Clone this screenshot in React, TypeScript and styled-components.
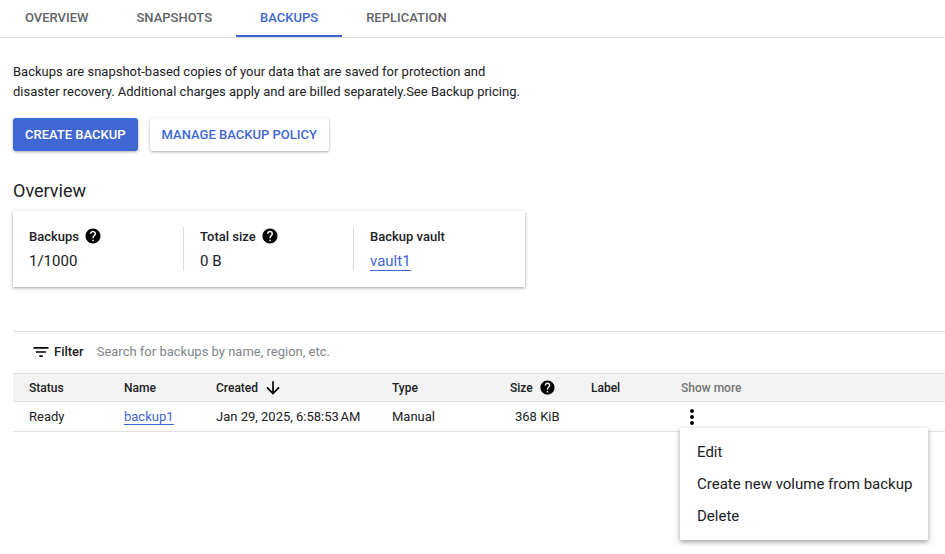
import React from 'react';
import styled, { createGlobalStyle } from 'styled-components';
import { MdArrowDownward, MdFilterList, MdHelp, MdMoreVert } from 'react-icons/md';

const GlobalStyle = createGlobalStyle`
  html, body {
    margin: 0;
    padding: 0;
    background: #fff;
    overflow: hidden;
  }
  body {
    font-family: Roboto, "Liberation Sans", sans-serif;
    color: #202124;
    -webkit-font-smoothing: antialiased;
  }
`;

const Page = styled.div`
  position: relative;
  width: 945px;
  height: 554px;
  overflow: hidden;
`;

const TabBar = styled.div`
  display: flex;
  height: 37px;
  padding-left: 1px;
  border-bottom: 1px solid #dadce0;
`;

const Tab = styled.div<{ $active?: boolean }>`
  display: flex;
  align-items: center;
  height: 37px;
  box-sizing: border-box;
  padding: 0 24px 1px;
  font-size: 13px;
  font-weight: 500;
  color: ${(p) => (p.$active ? '#3f67d3' : '#5f6368')};
  border-bottom: 2px solid ${(p) => (p.$active ? '#3f67d3' : 'transparent')};
`;

const Content = styled.div`
  padding: 24px 0 0 13px;
`;

const Intro = styled.p`
  margin: 0;
  width: 520px;
  font-size: 13px;
  line-height: 20px;
`;

const ButtonRow = styled.div`
  display: flex;
  gap: 12px;
  margin-top: 16px;
`;

const Button = styled.div<{ $primary?: boolean }>`
  display: flex;
  align-items: center;
  height: 33px;
  padding: 0 12px;
  border-radius: 3px;
  font-size: 13px;
  font-weight: 500;
  color: ${(p) => (p.$primary ? '#fff' : '#3f67d3')};
  background: ${(p) => (p.$primary ? '#3f67d3' : '#fff')};
  box-shadow: 0 1px 3px rgba(60, 64, 67, 0.45);
`;

const SectionTitle = styled.h2`
  margin: 29px 0 0;
  font-size: 18px;
  line-height: 22px;
  font-weight: 400;
`;

const Card = styled.div`
  display: flex;
  box-sizing: border-box;
  width: 512px;
  height: 76px;
  margin-top: 9px;
  padding: 16px 0;
  box-shadow: 0 1px 3px rgba(60, 64, 67, 0.5);
`;

const Stat = styled.div<{ $first?: boolean; $width: number }>`
  box-sizing: border-box;
  width: ${(p) => p.$width}px;
  padding-left: 16px;
  border-left: ${(p) => (p.$first ? 'none' : '1px solid #dadce0')};
`;

const StatLabel = styled.div`
  display: flex;
  align-items: center;
  gap: 5px;
  height: 18px;
  font-size: 13px;
  font-weight: 500;
  svg {
    font-size: 18px;
    color: #000;
  }
`;

const StatValue = styled.div`
  margin-top: 6px;
  font-size: 15px;
  line-height: 20px;
`;

const Link = styled.span`
  color: #3f67d3;
  border-bottom: 1px solid #3f67d3;
`;

const Section = styled.div`
  margin: 44px 0 0 13px;
  border-top: 1px solid #dadce0;
`;

const FilterBar = styled.div`
  display: flex;
  align-items: center;
  height: 41px;
  padding: 0 0 2px 18px;
  box-sizing: border-box;
  font-size: 13px;
  svg {
    font-size: 20px;
    color: #000;
  }
`;

const FilterLabel = styled.span`
  margin-left: 3px;
  font-weight: 500;
`;

const FilterHint = styled.span`
  margin-left: 13px;
  color: #80868b;
`;

const Row = styled.div<{ $header?: boolean }>`
  display: grid;
  grid-template-columns: 95px 92px 176px 118px 81px 90px 1fr;
  align-items: center;
  box-sizing: border-box;
  padding-left: 16px;
  height: ${(p) => (p.$header ? '29px' : '30px')};
  font-size: ${(p) => (p.$header ? '12px' : '13px')};
  font-weight: ${(p) => (p.$header ? 500 : 400)};
  background: ${(p) => (p.$header ? '#f3f3f3' : '#fff')};
  border-top: ${(p) => (p.$header ? '1px solid #e0e0e0' : 'none')};
  border-bottom: 1px solid #e0e0e0;
`;

const HeadCell = styled.div<{ $muted?: boolean }>`
  display: flex;
  align-items: center;
  color: ${(p) => (p.$muted ? '#757575' : 'inherit')};
`;

const SortIcon = styled(MdArrowDownward)`
  font-size: 20px;
  margin-left: 5px;
  color: #000;
`;

const SizeHelp = styled(MdHelp)`
  font-size: 17px;
  margin-left: 6px;
  color: #000;
`;

const SizeCell = styled.div`
  padding-left: 5px;
`;

const MoreCell = styled.div`
  display: flex;
  margin-left: -1px;
  svg {
    font-size: 24px;
    color: #000;
  }
`;

const Menu = styled.div`
  position: absolute;
  left: 680px;
  top: 428px;
  width: 248px;
  padding: 8px 0;
  background: #fff;
  box-shadow: 0 2px 5px rgba(60, 64, 67, 0.5);
`;

const MenuItem = styled.div`
  display: flex;
  align-items: center;
  height: 32px;
  padding-left: 17px;
  font-size: 15px;
`;

const App: React.FC = () => {
  return (
    <Page>
      <GlobalStyle />
      <TabBar>
        <Tab>OVERVIEW</Tab>
        <Tab>SNAPSHOTS</Tab>
        <Tab $active>BACKUPS</Tab>
        <Tab>REPLICATION</Tab>
      </TabBar>
      <Content>
        <Intro>
          Backups are snapshot-based copies of your data that are saved for protection and disaster
          recovery. Additional charges apply and are billed separately.See Backup pricing.
        </Intro>
        <ButtonRow>
          <Button $primary>CREATE BACKUP</Button>
          <Button>MANAGE BACKUP POLICY</Button>
        </ButtonRow>
        <SectionTitle>Overview</SectionTitle>
        <Card>
          <Stat $first $width={170}>
            <StatLabel>
              Backups <MdHelp />
            </StatLabel>
            <StatValue>1/1000</StatValue>
          </Stat>
          <Stat $width={170}>
            <StatLabel>
              Total size <MdHelp />
            </StatLabel>
            <StatValue>0 B</StatValue>
          </Stat>
          <Stat $width={172}>
            <StatLabel>Backup vault</StatLabel>
            <StatValue>
              <Link>vault1</Link>
            </StatValue>
          </Stat>
        </Card>
      </Content>
      <Section>
        <FilterBar>
          <MdFilterList />
          <FilterLabel>Filter</FilterLabel>
          <FilterHint>Search for backups by name, region, etc.</FilterHint>
        </FilterBar>
        <Row $header>
          <HeadCell>Status</HeadCell>
          <HeadCell>Name</HeadCell>
          <HeadCell>
            Created <SortIcon />
          </HeadCell>
          <HeadCell>Type</HeadCell>
          <HeadCell>
            Size <SizeHelp />
          </HeadCell>
          <HeadCell>Label</HeadCell>
          <HeadCell $muted>Show more</HeadCell>
        </Row>
        <Row>
          <div>Ready</div>
          <div>
            <Link>backup1</Link>
          </div>
          <div>Jan 29, 2025, 6:58:53{'\u202f'}AM</div>
          <div>Manual</div>
          <SizeCell>368 KiB</SizeCell>
          <div />
          <MoreCell>
            <MdMoreVert />
          </MoreCell>
        </Row>
      </Section>
      <Menu>
        <MenuItem>Edit</MenuItem>
        <MenuItem>Create new volume from backup</MenuItem>
        <MenuItem>Delete</MenuItem>
      </Menu>
    </Page>
  );
};

export default App;
